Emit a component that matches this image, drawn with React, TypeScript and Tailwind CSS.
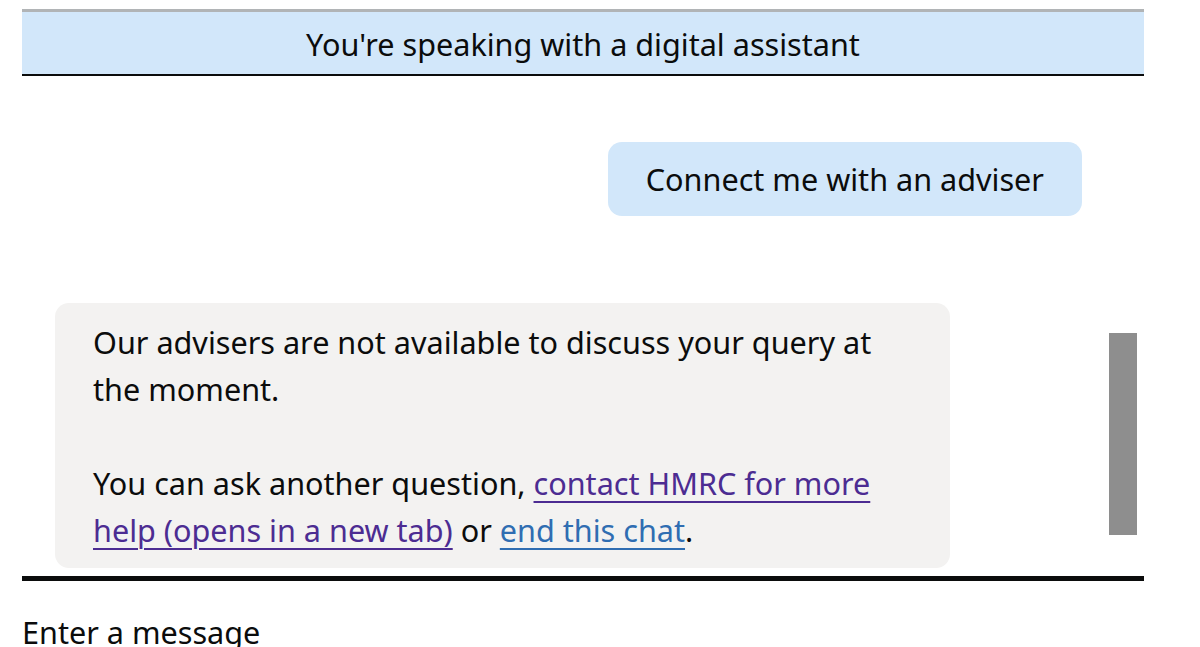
export default function App() {
  return (
    <div className="h-[647px] w-full overflow-hidden bg-white text-[#0b0c0c] font-['Noto_Sans',sans-serif]">
      <div className="ml-[22px] w-[1122px]">
        <div className="mt-[9px] flex h-[67px] items-center justify-center border-t-[3px] border-b-2 border-t-[#b1b4b6] border-b-[#0b0c0c] bg-[#d2e7fa] pt-[3px] text-[30.6px]">
          You're speaking with a digital assistant
        </div>

        <div className="flex h-[500px]">
          <div className="ml-[33px] flex w-[1027px] flex-col">
            <div className="mt-[66px] flex h-[74px] items-center self-end rounded-[14px] bg-[#d2e7fa] px-[38px] pt-[2px] text-[30.6px]">
              Connect me with an adviser
            </div>
            <div className="mt-[87px] w-[895px] rounded-[14px] bg-[#f3f2f1] px-[38px] pt-[16px] pb-[14px] text-[30.6px] leading-[47px]">
              <p>Our advisers are not available to discuss your query at the moment.</p>
              <p className="mt-[47px]">
                You can ask another question,{' '}
                <a className="text-[#4c2c92] underline decoration-[1.5px] underline-offset-[6px]">
                  contact HMRC for more help (opens in a new tab)
                </a>{' '}
                or{' '}
                <a className="text-[#2f6db2] underline decoration-[1.5px] underline-offset-[6px]">end this chat</a>.
              </p>
            </div>
          </div>
          <div className="ml-[27px] mt-[257px] h-[202px] w-[28px] bg-[#8e8e8e]" />
        </div>

        <div className="h-[5px] bg-[#0b0c0c]" />
        <div className="mt-[31px] text-[30.6px] leading-[40px]">Enter a message</div>
      </div>
    </div>
  );
}
